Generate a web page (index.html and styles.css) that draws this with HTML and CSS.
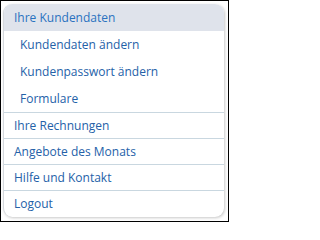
FILE: index.html
```html
<!DOCTYPE html>
<html>
<head>
<meta charset="utf-8">
<link rel="stylesheet" href="styles.css">
</head>
<body>
<div class="frame">
  <nav class="menu">
    <div class="head">Ihre Kundendaten</div>
    <ul class="sub">
      <li>Kundendaten ändern</li>
      <li>Kundenpasswort ändern</li>
      <li>Formulare</li>
    </ul>
    <ul class="main">
      <li>Ihre Rechnungen</li>
      <li>Angebote des Monats</li>
      <li>Hilfe und Kontakt</li>
      <li>Logout</li>
    </ul>
  </nav>
</div>
</body>
</html>
```

FILE: styles.css
```css
html, body {
  margin: 0;
  padding: 0;
  background: #fff;
}
.frame {
  box-sizing: border-box;
  width: 229px;
  height: 222px;
  border: 1px solid #000;
  padding: 3px 4px 4px 2px;
  background: #fff;
}
.menu {
  background: #fff;
  border-radius: 9px;
  border-left: 1px solid #d4d8dd;
  box-shadow: 1px 1px 3px rgba(0,0,0,0.22);
  overflow: hidden;
  font-family: "Open Sans", sans-serif;
  font-size: 12px;
  color: #2461a8;
}
.head {
  background: #dfe3eb;
  height: 27px;
  line-height: 27px;
  padding-left: 10px;
  color: #2a72c0;
}
ul {
  list-style: none;
  margin: 0;
  padding: 0;
}
.sub li {
  height: 27px;
  line-height: 27px;
  padding-left: 16px;
}
.sub {
  border-bottom: 1px solid #c9d7e0;
}
.main li {
  height: 25px;
  line-height: 25px;
  padding-left: 10px;
  border-bottom: 1px solid #c9d7e0;
}
.main li:last-child {
  border-bottom: none;
  height: 26px;
}
```
